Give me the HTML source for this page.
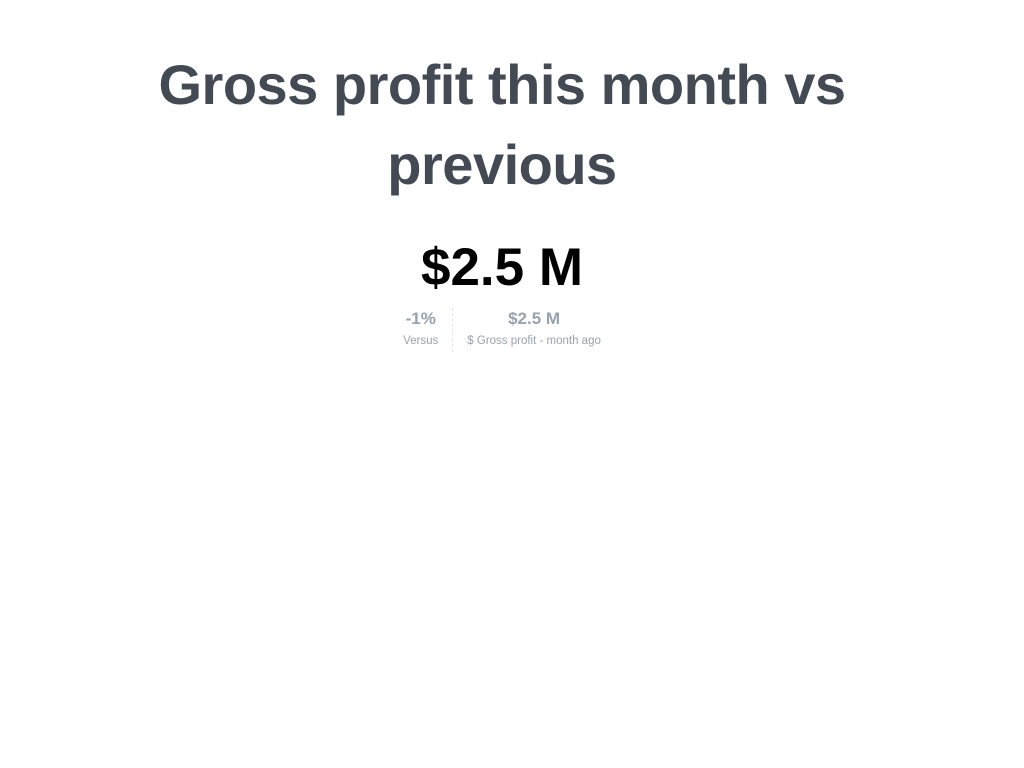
<!DOCTYPE html>
<html><head><style>
body{margin:0;width:1024px;height:768px;background:#fff;font-family:"Liberation Sans",sans-serif;overflow:hidden;position:relative}
h1{position:absolute;left:0;top:45px;width:1004px;text-align:center;margin:0;font-size:56px;line-height:80px;font-weight:bold;color:#434a54;letter-spacing:-0.5px}
.big{position:absolute;left:0;width:1004px;top:239px;text-align:center;font-size:53px;font-weight:bold;color:#000;line-height:58px}
.sub{position:absolute;top:308px;left:0;width:1004px;display:flex;justify-content:center}
.c{text-align:center;padding:0 14px}
.c b{display:block;font-size:17px;color:#98a2ae;line-height:22px}
.c span{display:block;font-size:11.5px;color:#98a2ae;line-height:22px}
.d{border-left:1px dashed #dfe3e8}
</style></head><body>
<h1>Gross profit this month vs<br>previous</h1>
<div class="big">$2.5 M</div>
<div class="sub"><div class="c"><b>-1%</b><span>Versus</span></div><div class="c d"><b>$2.5 M</b><span>$ Gross profit - month ago</span></div></div>
</body></html>
